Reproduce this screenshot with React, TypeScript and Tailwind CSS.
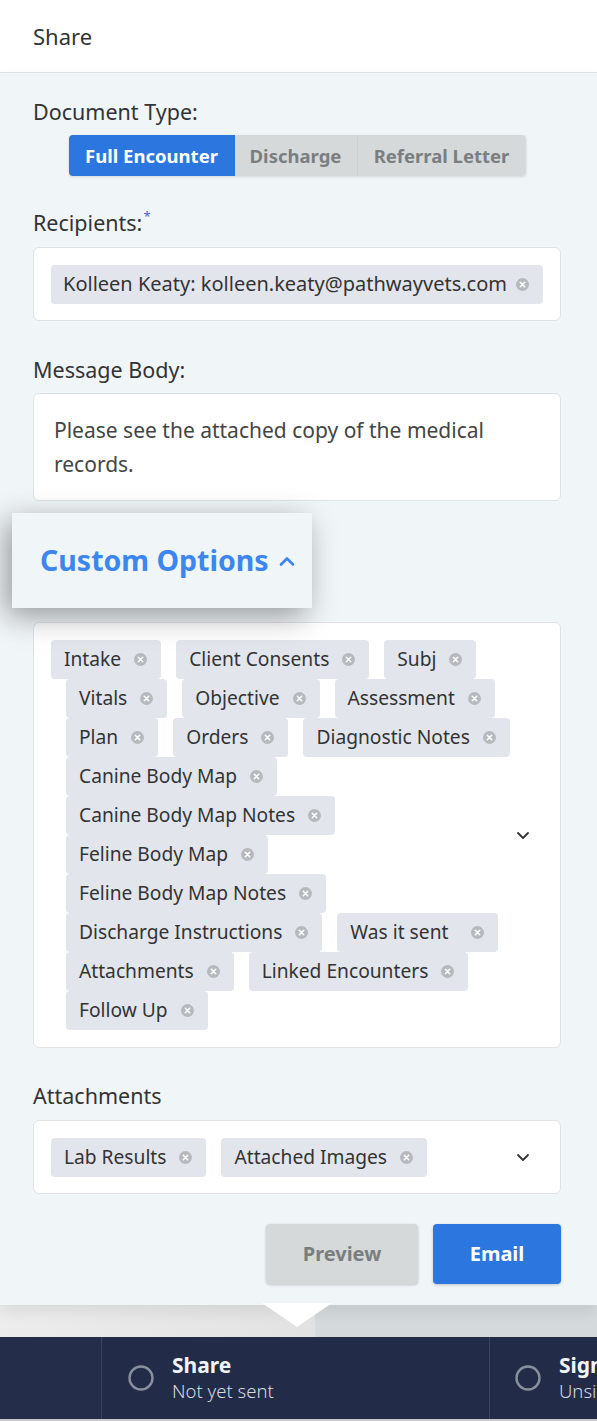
import React from "react";

const XIcon = () => (
  <svg width="13" height="13" viewBox="0 0 13 13" className="shrink-0">
    <circle cx="6.5" cy="6.5" r="6.5" fill="#b6b9be" />
    <path d="M4.3 4.3 L8.7 8.7 M8.7 4.3 L4.3 8.7" stroke="#ffffff" strokeWidth="1.6" strokeLinecap="round" />
  </svg>
);

const Chip = ({ label }: { label: string }) => (
  <div className="flex items-center h-[39px] bg-[#e2e6ec] rounded-[4px] pl-[13px] pr-[14px] gap-[13px] text-[19.2px] text-[#333333] whitespace-pre">
    <span>{label}</span>
    <XIcon />
  </div>
);

const ChevronDown = () => (
  <svg width="14" height="10" viewBox="0 0 14 10">
    <path d="M2 3 L7 8 L12 3" fill="none" stroke="#333333" strokeWidth="1.8" strokeLinecap="round" strokeLinejoin="round" />
  </svg>
);

const rows: string[][] = [
  ["Intake", "Client Consents", "Subj"],
  ["Vitals", "Objective", "Assessment"],
  ["Plan", "Orders", "Diagnostic Notes"],
  ["Canine Body Map"],
  ["Canine Body Map Notes"],
  ["Feline Body Map"],
  ["Feline Body Map Notes"],
  ["Discharge Instructions", "Was it sent  "],
  ["Attachments", "Linked Encounters"],
  ["Follow Up"],
];

export default function App() {
  return (
    <div
      className="w-[597px] h-[1421px] overflow-hidden flex flex-col bg-[#d5d9db]"
      style={{ fontFamily: "'Noto Sans', 'Liberation Sans', sans-serif" }}
    >
      {/* Header */}
      <div className="h-[73px] shrink-0 bg-white border-b border-[#dfe3e6] flex items-center px-[33px] text-[22px] text-[#333333]">
        Share
      </div>

      {/* Body */}
      <div className="bg-[#f0f5f8] pl-[33px] pr-[36px] pt-[26px] pb-[21px] flex flex-col shrink-0 relative z-10 shadow-[0_6px_14px_rgba(0,0,0,0.08)]">
        <div className="text-[21.5px] leading-[26px] text-[#333333]">Document Type:</div>
        <div className="flex justify-center mt-[10px]">
          <div className="flex h-[41px] rounded-[4px] overflow-hidden shadow-[0_1px_3px_rgba(0,0,0,0.12)] text-[18.5px] font-bold">
            <div className="bg-[#2b76df] text-white w-[166px] flex items-center justify-center">Full Encounter</div>
            <div className="bg-[#d5d9da] text-[#7a7e80] w-[123px] flex items-center justify-center border-r border-[#cdd1d2]">Discharge</div>
            <div className="bg-[#d5d9da] text-[#7a7e80] w-[168px] flex items-center justify-center">Referral Letter</div>
          </div>
        </div>

        <div className="mt-[34px] text-[21.5px] leading-[26px] text-[#333333] flex items-start">
          <span>Recipients:</span>
          <span className="text-[#4a5bd0] text-[13px] leading-[13px] ml-[1px]">*</span>
        </div>
        <div className="mt-[11px] h-[74px] bg-white border border-[#dfe3e6] rounded-[6px] flex items-center px-[17px]">
          <div className="flex-1 flex items-center justify-between h-[39px] bg-[#e2e6ec] rounded-[4px] pl-[12px] pr-[14px] text-[20px] text-[#333333]">
            <span>Kolleen Keaty: kolleen.keaty@pathwayvets.com</span>
            <XIcon />
          </div>
        </div>

        <div className="mt-[36px] text-[21.5px] leading-[26px] text-[#333333]">Message Body:</div>
        <div className="mt-[10px] h-[108px] bg-white border border-[#dfe3e6] rounded-[6px] px-[20px] pt-[19px] text-[21px] leading-[34px] text-[#444444]">
          Please see the attached copy of the medical records.
        </div>

        {/* Custom Options highlight */}
        <div className="relative z-20 ml-[-21px] mt-[12px] w-[300px] h-[95px] bg-[#f0f5f8] shadow-[-6px_8px_28px_rgba(0,0,0,0.38)] flex items-center pl-[28px] gap-[10px]">
          <span className="text-[28.5px] font-bold text-[#3d86ef]">Custom Options</span>
          <svg width="16" height="11" viewBox="0 0 16 11" className="mt-[2px]">
            <path d="M2 8.5 L8 2.5 L14 8.5" fill="none" stroke="#3d86ef" strokeWidth="2.6" strokeLinecap="round" strokeLinejoin="round" />
          </svg>
        </div>

        <div className="mt-[14px] bg-white border border-[#dfe3e6] rounded-[6px] pl-[17px] pr-[30px] py-[17px] flex items-center">
          <div className="flex-1 flex flex-col">
            {rows.map((row, i) => (
              <div key={i} className={`flex gap-[15px] ${i === 0 ? "" : "pl-[15px]"}`}>
                {row.map((c) => (
                  <Chip key={c} label={c} />
                ))}
              </div>
            ))}
          </div>
          <ChevronDown />
        </div>

        <div className="mt-[35px] text-[21.5px] leading-[26px] text-[#333333]">Attachments</div>
        <div className="mt-[11px] h-[74px] bg-white border border-[#dfe3e6] rounded-[6px] flex items-center pl-[17px] pr-[30px]">
          <div className="flex-1 flex gap-[15px]">
            <Chip label="Lab Results" />
            <Chip label="Attached Images" />
          </div>
          <ChevronDown />
        </div>

        <div className="mt-[30px] flex justify-end gap-[15px]">
          <div className="w-[152px] h-[60px] rounded-[4px] bg-[#d5d9da] text-[#7a7e80] font-bold text-[20px] flex items-center justify-center shadow-[0_1px_3px_rgba(0,0,0,0.2)]">
            Preview
          </div>
          <div className="w-[128px] h-[60px] rounded-[4px] bg-[#2b76df] text-white font-bold text-[20px] flex items-center justify-center shadow-[0_1px_3px_rgba(0,0,0,0.2)]">
            Email
          </div>
        </div>
      </div>

      {/* Backdrop band with pointer */}
      <div className="h-[32px] shrink-0 flex relative">
        <div className="w-[315px] bg-gradient-to-r from-[#ececec] to-[#e2e2e2]" />
        <div className="flex-1 bg-[#d4d9db]" />
        <svg width="70" height="24" viewBox="0 0 70 24" className="absolute left-[262px] top-[-2px] z-20">
          <path d="M0 0 L70 0 L35 24 Z" fill="#ffffff" />
        </svg>
      </div>

      {/* Nav bar */}
      <div className="h-[82px] shrink-0 bg-[#222b47] flex relative">
        <div className="w-[102px] border-r border-[#3a4360] bg-[#242d49]" />
        <div className="w-[388px] border-r border-[#3a4360] flex items-center pl-[26px] gap-[18px]">
          <svg width="26" height="26" viewBox="0 0 26 26">
            <circle cx="13" cy="13" r="11.5" fill="none" stroke="#8a8f9e" strokeWidth="2.4" />
          </svg>
          <div className="flex flex-col">
            <span className="text-[21px] font-bold text-[#f2f3f6] leading-[26px]">Share</span>
            <span className="text-[18.5px] font-light text-[#d8dae0] leading-[26px]">Not yet sent</span>
          </div>
        </div>
        <div className="flex-1 flex items-center pl-[25px] gap-[18px] overflow-hidden whitespace-nowrap">
          <svg width="26" height="26" viewBox="0 0 26 26" className="shrink-0">
            <circle cx="13" cy="13" r="11.5" fill="none" stroke="#8a8f9e" strokeWidth="2.4" />
          </svg>
          <div className="flex flex-col">
            <span className="text-[21px] font-bold text-[#f2f3f6] leading-[26px]">Sign</span>
            <span className="text-[18.5px] font-light text-[#d8dae0] leading-[26px]">Unsi</span>
          </div>
        </div>
      </div>
      <div className="h-[2px] bg-[#c6c8ca]" />
    </div>
  );
}
